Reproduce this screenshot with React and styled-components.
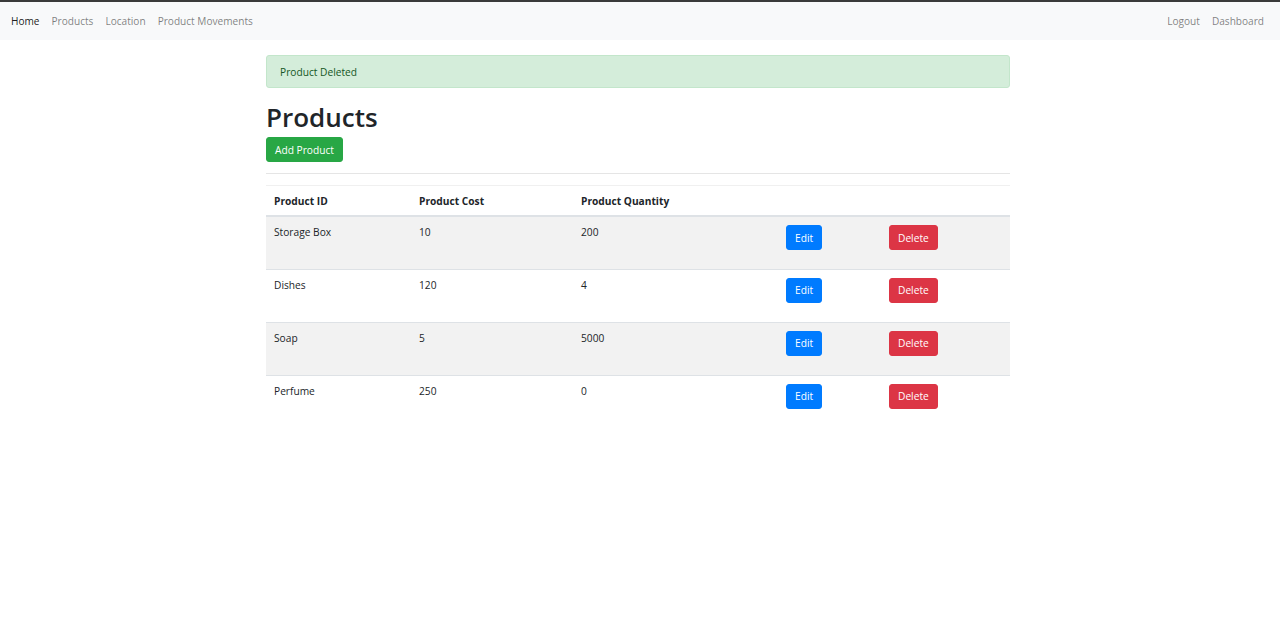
import React from "react";
import styled, { createGlobalStyle } from "styled-components";

const GlobalStyle = createGlobalStyle`
  html, body {
    margin: 0;
    padding: 0;
    background: #fff;
  }
  body {
    font-family: "Open Sans", "Noto Sans", sans-serif;
    font-size: 10.2px;
    color: #212529;
    border-top: 2px solid #3a3a3a;
  }
`;

const products = [
  { id: "Storage Box", cost: 10, qty: 200 },
  { id: "Dishes", cost: 120, qty: 4 },
  { id: "Soap", cost: 5, qty: 5000 },
  { id: "Perfume", cost: 250, qty: 0 },
];

export default function App() {
  return (
    <>
      <GlobalStyle />
      <Nav>
        <NavGroup>
          <NavLink $active>Home</NavLink>
          <NavLink>Products</NavLink>
          <NavLink>Location</NavLink>
          <NavLink>Product Movements</NavLink>
        </NavGroup>
        <NavGroup>
          <NavLink>Logout</NavLink>
          <NavLink>Dashboard</NavLink>
        </NavGroup>
      </Nav>
      <Container>
        <Alert>Product Deleted</Alert>
        <Title>Products</Title>
        <Button $color="#28a745">Add Product</Button>
        <Rule />
        <Table>
          <colgroup>
            <col style={{ width: 145 }} />
            <col style={{ width: 162 }} />
            <col style={{ width: 205 }} />
            <col style={{ width: 103 }} />
            <col />
          </colgroup>
          <thead>
            <tr>
              <Th>Product ID</Th>
              <Th>Product Cost</Th>
              <Th>Product Quantity</Th>
              <Th></Th>
              <Th></Th>
            </tr>
          </thead>
          <tbody>
            {products.map((p) => (
              <Row key={p.id}>
                <Td>{p.id}</Td>
                <Td>{p.cost}</Td>
                <Td>{p.qty}</Td>
                <Td>
                  <Form>
                    <Button $color="#007bff">Edit</Button>
                  </Form>
                </Td>
                <Td>
                  <Form>
                    <Button $color="#dc3545">Delete</Button>
                  </Form>
                </Td>
              </Row>
            ))}
          </tbody>
        </Table>
      </Container>
    </>
  );
}

const Nav = styled.nav`
  display: flex;
  justify-content: space-between;
  align-items: center;
  height: 38px;
  padding: 0 16px 0 11px;
  background: #f8f9fa;
`;

const NavGroup = styled.div`
  display: flex;
  gap: 12px;
`;

const NavLink = styled.a`
  color: ${(p) => (p.$active ? "rgba(0,0,0,0.9)" : "rgba(0,0,0,0.5)")};
  font-size: 10.1px;
  cursor: pointer;
`;

const Container = styled.div`
  width: 744px;
  margin-left: calc(50% - 374px);
  padding-top: 15px;
`;

const Alert = styled.div`
  background: #d4edda;
  border: 1px solid #c3e6cb;
  color: #155724;
  border-radius: 3px;
  padding: 0 13px;
  height: 31px;
  display: flex;
  align-items: center;
  margin-bottom: 14px;
`;

const Title = styled.h1`
  font-size: 26px;
  font-weight: 600;
  line-height: 1.2;
  margin: 0 0 4px;
  color: #212529;
`;

const Button = styled.button`
  background: ${(p) => p.$color};
  border: 1px solid ${(p) => p.$color};
  color: #fff;
  font-family: inherit;
  font-size: 10.2px;
  height: 25px;
  padding: 0 8px;
  border-radius: 3px;
  cursor: pointer;
`;

const Rule = styled.hr`
  border: 0;
  border-top: 1px solid rgba(0, 0, 0, 0.1);
  margin: 11px 0;
`;

const Table = styled.table`
  width: 100%;
  table-layout: fixed;
  border-collapse: collapse;
  border-top: 1px solid #f0f0f0;
`;

const Th = styled.th`
  text-align: left;
  font-weight: 700;
  padding: 8px 8px 7px;
  border-bottom: 2px solid #dee2e6;
`;

const Row = styled.tr`
  height: 53px;
  border-top: 1px solid #dee2e6;
  &:nth-child(odd) {
    background: #f2f2f2;
  }
`;

const Td = styled.td`
  vertical-align: top;
  padding: 8px;
`;

const Form = styled.form`
  margin: 0 0 10px;
`;
